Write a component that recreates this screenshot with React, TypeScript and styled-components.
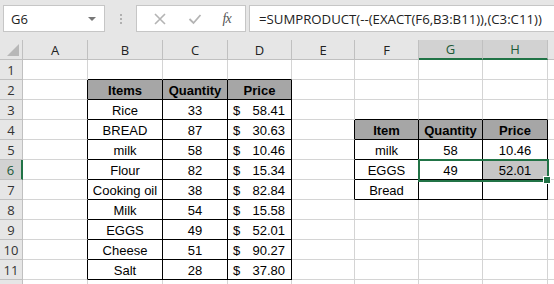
import React from "react";
import styled, { createGlobalStyle } from "styled-components";

const GREEN = "#217346";
const GRID = "#d4d4d4";

const GlobalStyle = createGlobalStyle`
  html, body {
    margin: 0;
    padding: 0;
    background: #ffffff;
    overflow: hidden;
  }
  * {
    box-sizing: border-box;
  }
`;

const Page = styled.div`
  width: 554px;
  height: 284px;
  overflow: hidden;
  background: #ffffff;
  font-family: "Liberation Sans", Arial, sans-serif;
`;

const Toolbar = styled.div`
  height: 40px;
  background: #e6e6e6;
  display: flex;
  align-items: flex-start;
  padding: 5px 0 0 3px;
`;

const NameBox = styled.div`
  width: 102px;
  height: 27px;
  background: #ffffff;
  border: 1px solid #c6c6c6;
  display: flex;
  align-items: center;
  justify-content: space-between;
  padding: 0 8px 0 7px;
  font-family: "Open Sans", sans-serif;
  font-size: 13px;
  color: #222;
`;

const DropArrow = styled.span`
  width: 0;
  height: 0;
  border-left: 4px solid transparent;
  border-right: 4px solid transparent;
  border-top: 4px solid #777;
`;

const Dots = styled.div`
  width: 31px;
  height: 27px;
  display: flex;
  flex-direction: column;
  align-items: center;
  justify-content: center;
  gap: 2px;
  & span {
    width: 2px;
    height: 2px;
    background: #b0b0b0;
  }
`;

const FxBox = styled.div`
  width: 110px;
  height: 27px;
  background: #ffffff;
  border: 1px solid #c6c6c6;
  display: flex;
  align-items: center;
  justify-content: space-around;
  padding: 0 4px 0 6px;
`;

const FxText = styled.span`
  font-family: "Liberation Serif", serif;
  font-style: italic;
  font-size: 14px;
  color: #555;
  letter-spacing: -1px;
`;

const FormulaBox = styled.div`
  flex: 1;
  height: 27px;
  margin-left: 3px;
  background: #ffffff;
  border: 1px solid #c6c6c6;
  border-right: none;
  display: flex;
  align-items: center;
  padding-left: 9px;
  font-family: "Open Sans", sans-serif;
  font-size: 13.2px;
  color: #222;
  white-space: nowrap;
  overflow: hidden;
`;

const Sheet = styled.div`
  position: relative;
  display: grid;
  grid-template-columns: 23px 65px 75px 65px 64px 63px 64px 64px 65px 1fr;
  grid-auto-rows: 20px;
`;

const ColHead = styled.div<{ $sel?: boolean }>`
  background: ${(p) => (p.$sel ? "#d2d2d2" : "#e6e6e6")};
  border-right: 1px solid #c0c0c0;
  border-bottom: ${(p) => (p.$sel ? `2px solid ${GREEN}` : "1px solid #c0c0c0")};
  display: flex;
  align-items: center;
  justify-content: center;
  font-family: "Open Sans", sans-serif;
  font-size: 13px;
  color: ${(p) => (p.$sel ? "#1d5a37" : "#222")};
`;

const Corner = styled.div`
  background: #e6e6e6;
  border-right: 1px solid #c0c0c0;
  border-bottom: 1px solid #c0c0c0;
  position: relative;
  &::after {
    content: "";
    position: absolute;
    right: 3px;
    bottom: 3px;
    width: 0;
    height: 0;
    border-left: 12px solid transparent;
    border-bottom: 12px solid #b8b8b8;
  }
`;

const RowHead = styled.div<{ $sel?: boolean }>`
  background: ${(p) => (p.$sel ? "#d2d2d2" : "#e6e6e6")};
  border-right: ${(p) => (p.$sel ? `2px solid ${GREEN}` : "1px solid #c0c0c0")};
  border-bottom: 1px solid #c0c0c0;
  display: flex;
  align-items: center;
  justify-content: center;
  font-family: "Open Sans", sans-serif;
  font-size: 13px;
  color: ${(p) => (p.$sel ? "#1d5a37" : "#333")};
`;

const Cell = styled.div<{
  $right: boolean;
  $bottom: boolean;
  $head?: boolean;
  $fill?: string;
}>`
  background: ${(p) => p.$fill ?? (p.$head ? "#a6a6a6" : "#ffffff")};
  border-right: 1px solid ${(p) => (p.$right ? "#000" : GRID)};
  border-bottom: 1px solid ${(p) => (p.$bottom ? "#000" : GRID)};
  display: flex;
  align-items: center;
  justify-content: center;
  padding: 1px 3px 0;
  font-size: 13px;
  font-weight: ${(p) => (p.$head ? 700 : 400)};
  color: #000;
  white-space: nowrap;
  overflow: visible;
`;

const Money = styled.div`
  width: 100%;
  display: flex;
  justify-content: space-between;
  padding: 0 3px 0 2px;
`;

const Selection = styled.div`
  position: absolute;
  left: 418px;
  top: 119px;
  width: 131px;
  height: 23px;
  border: 2px solid ${GREEN};
  pointer-events: none;
  &::after {
    content: "";
    position: absolute;
    right: -4px;
    bottom: -4px;
    width: 6px;
    height: 6px;
    background: ${GREEN};
    border: 1px solid #fff;
  }
`;

const XIcon = () => (
  <svg width="14" height="14" viewBox="0 0 14 14">
    <path d="M2 2 L12 12 M12 2 L2 12" stroke="#b4b4b4" strokeWidth="1.6" fill="none" />
  </svg>
);

const CheckIcon = () => (
  <svg width="14" height="14" viewBox="0 0 14 14">
    <path d="M1.5 7 L5.5 11 L12.5 3" stroke="#b4b4b4" strokeWidth="1.8" fill="none" />
  </svg>
);

type Val = string | { money: string };

const LETTERS = ["A", "B", "C", "D", "E", "F", "G", "H", ""];

// table data keyed by "row,col" (col index 0 = A)
const data: Record<string, Val> = {};
const heads = new Set<string>();
const inTable = new Set<string>();

function putTable(r0: number, c0: number, rows: Val[][]) {
  rows.forEach((row, i) =>
    row.forEach((v, j) => {
      const k = `${r0 + i},${c0 + j}`;
      data[k] = v;
      inTable.add(k);
      if (i === 0) heads.add(k);
    })
  );
}

putTable(2, 1, [
  ["Items", "Quantity", "Price"],
  ["Rice", "33", { money: "58.41" }],
  ["BREAD", "87", { money: "30.63" }],
  ["milk", "58", { money: "10.46" }],
  ["Flour", "82", { money: "15.34" }],
  ["Cooking oil", "38", { money: "82.84" }],
  ["Milk", "54", { money: "15.58" }],
  ["EGGS", "49", { money: "52.01" }],
  ["Cheese", "51", { money: "90.27" }],
  ["Salt", "28", { money: "37.80" }],
]);

putTable(4, 5, [
  ["Item", "Quantity", "Price"],
  ["milk", "58", "10.46"],
  ["EGGS", "49", "52.01"],
  ["Bread", "", ""],
]);

// row 12 only peeks in at the bottom edge, so its number stays hidden
const ROWS = Array.from({ length: 12 }, (_, i) => i + 1);
const has = (r: number, c: number) => inTable.has(`${r},${c}`);

export default function App() {
  return (
    <Page>
      <GlobalStyle />
      <Toolbar>
        <NameBox>
          G6
          <DropArrow />
        </NameBox>
        <Dots>
          <span />
          <span />
          <span />
        </Dots>
        <FxBox>
          <XIcon />
          <CheckIcon />
          <FxText>fx</FxText>
        </FxBox>
        <FormulaBox>=SUMPRODUCT(--(EXACT(F6,B3:B11)),(C3:C11))</FormulaBox>
      </Toolbar>
      <Sheet>
        <Corner />
        {LETTERS.map((l, i) => (
          <ColHead key={i} $sel={l === "G" || l === "H"}>
            {l}
          </ColHead>
        ))}
        {ROWS.map((r) => (
          <React.Fragment key={r}>
            <RowHead $sel={r === 6}>{r < 12 ? r : ""}</RowHead>
            {LETTERS.map((_, c) => {
              const k = `${r},${c}`;
              const v = data[k];
              const right = has(r, c) || has(r, c + 1);
              const bottom = has(r, c) || has(r + 1, c);
              return (
                <Cell
                  key={c}
                  $right={right}
                  $bottom={bottom}
                  $head={heads.has(k)}
                  $fill={r === 6 && c === 7 ? "#c6c6c6" : undefined}
                >
                  {typeof v === "object" ? (
                    <Money>
                      <span>$</span>
                      <span>{v.money}</span>
                    </Money>
                  ) : (
                    v
                  )}
                </Cell>
              );
            })}
          </React.Fragment>
        ))}
        <Selection />
      </Sheet>
    </Page>
  );
}
